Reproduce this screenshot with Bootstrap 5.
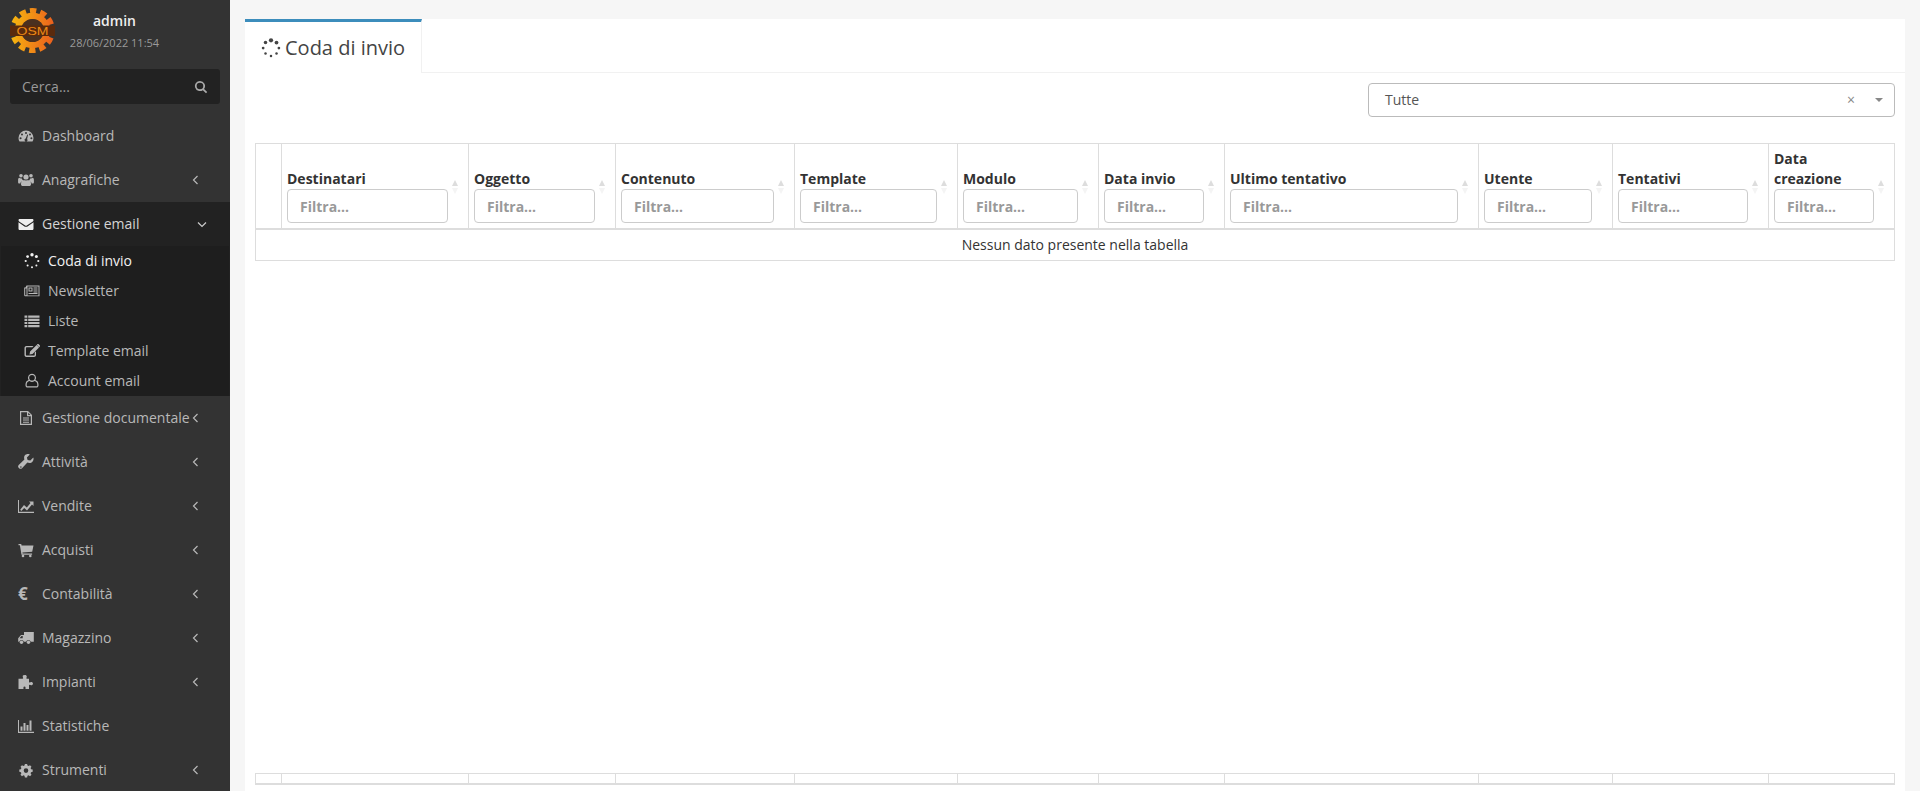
<!DOCTYPE html>
<html lang="it">
<head>
<meta charset="utf-8">
<title>Coda di invio</title>
<link href="https://cdn.jsdelivr.net/npm/bootstrap@5.3.0/dist/css/bootstrap.min.css" rel="stylesheet">
<style>
html,body{height:791px;overflow:hidden}
body{font-family:"Open Sans",sans-serif;font-size:14px;background:#f6f6f6;color:#333;line-height:20px}
.app-shell{height:791px}
.side{width:230px;flex:0 0 230px;background:#333;height:791px;overflow:hidden}
.user-box{height:69px;padding:8px 0 0 10px}
.user-meta{width:105px;margin-left:7px;text-align:center}
.user-name{color:#eee;font-weight:600;font-size:14px;line-height:20px;margin-top:3px}
.user-date{color:#9a9a9a;font-size:11px;line-height:16px;margin-top:4px;white-space:nowrap}
.search-box{margin:0 10px 10px;height:35px;background:#222;border-radius:3px;color:#999;padding:0 12px 0 12px}
.side-item{height:44px;padding:0 0 0 18px;color:#b8b8b8;white-space:nowrap}
.side-ico{width:16px;height:16px;flex:0 0 16px;margin-right:8px;fill:#b8b8b8}
.side-ico.euro{font-weight:700;font-size:17px;line-height:16px}
.side-chev{position:absolute;right:31px;width:7px;height:10px;fill:none;stroke:#b8b8b8;stroke-width:1.2}
.side-rel{position:relative}
.open-group{background:#222}
.open-group .side-item{color:#d4d4d4}
.open-group .side-item .side-ico{fill:#eee}
.open-group .side-chev{right:23px;width:10px;height:7px;stroke:#ccc}
.sub-list{margin:0 1px;background:#1e1e1e}
.sub-item{height:30px;padding-left:23px;color:#b8b8b8;white-space:nowrap}
.sub-item.is-on{color:#f2f2f2}
.sub-item .side-ico{margin-right:8px}
.sub-item.is-on .side-ico{fill:#f2f2f2}
.main-area{padding:19px 15px 0 15px;min-width:0}
.panel-box{background:#fff;height:772px}
.tab-row{height:54px;border-bottom:1px solid #f1f1f1}
.tab-on{width:177px;height:54px;border-top:3px solid #3c8dbc;border-right:1px solid #f1f1f1;background:#fff;color:#444;font-size:20px;padding-left:16px;margin-bottom:-1px}
.tab-on svg{width:20px;height:20px;margin-right:4px;fill:#444}
.panel-body{padding:10px 10px 6px 10px}
.pick-row{height:34px;margin-bottom:26px}
.pick-box{width:527px;height:34px;border:1px solid #bbb;border-radius:4px;padding:0 11px 0 16px;color:#555}
.pick-x{color:#888;font-size:14px;margin-right:20px;line-height:14px}
.pick-caret{width:0;height:0;border-left:4px solid transparent;border-right:4px solid transparent;border-top:4px solid #888}
.grid-tb{table-layout:fixed;width:1639px;margin:0;border-collapse:collapse}
.grid-tb th{position:relative;padding:5px 20px 5px 5px;vertical-align:bottom;font-weight:700;line-height:20px;border:1px solid #ddd;border-bottom:2px solid #ddd;color:#333}
.grid-tb td{padding:5px;text-align:center;border:1px solid #ddd;height:31px;color:#333}
.grid-tb .filter-in{height:34px;padding:0 10px 0 12px;font-size:14px;font-weight:700;border-color:#ccc;border-radius:4px;font-family:"Open Sans",sans-serif}
.filter-in::placeholder{color:#999;opacity:1}
.sort-up{position:absolute;right:10px;bottom:42px;width:0;height:0;border-left:3.5px solid transparent;border-right:3.5px solid transparent;border-bottom:6px solid #ddd}
.sort-up::after{content:"";position:absolute;left:-3.5px;top:8px;width:0;height:0;border-left:3.5px solid transparent;border-right:3.5px solid transparent;border-top:6px solid #f4f4f4}
.w0{width:26px}.w1{width:187px}.w2{width:147px}.w3{width:179px}.w4{width:163px}.w5{width:141px}.w6{width:126px}.w7{width:254px}.w8{width:134px}.w9{width:156px}.w10{width:126px}
.scroll-gap{flex:1 1 auto}
.grid-tb.foot-tb td{height:11px;padding:0;border:1px solid #ddd;border-bottom:2px solid #ddd}
</style>
</head>
<body>
<svg width="0" height="0" class="position-absolute">
<defs>
<symbol id="i-spin" viewBox="0 0 16 16"><circle cx="8" cy="1.800" r="1.700"/><circle cx="12.400" cy="3.600" r="1.500"/><circle cx="14.300" cy="8" r="1.100"/><circle cx="12.400" cy="12.400" r="1"/><circle cx="8" cy="14.300" r="1"/><circle cx="3.600" cy="12.400" r="1"/><circle cx="1.700" cy="8" r="1.100"/><circle cx="3.600" cy="3.600" r="1.400"/></symbol>
<symbol id="i-dash" viewBox="0 0 16 16"><path fill-rule="evenodd" d="M8 2.500A7.500 7.500 0 0 0 .5 10c0 1.400.4 2.600 1 3.500h13c.6-.9 1-2.100 1-3.500A7.500 7.500 0 0 0 8 2.500ZM8 4a1 1 0 1 1 0 2 1 1 0 0 1 0-2ZM4 5.500a1 1 0 1 1 0 2 1 1 0 0 1 0-2Zm8 0a1 1 0 1 1 0 2 1 1 0 0 1 0-2ZM2.600 9.300a1 1 0 1 1 0 2 1 1 0 0 1 0-2Zm10.800 0a1 1 0 1 1 0 2 1 1 0 0 1 0-2ZM9.300 6.500l.8.3-1 4.100a1.500 1.500 0 1 1-1.400-.4Z"/></symbol>
<symbol id="i-users" viewBox="0 0 16 16"><circle cx="8" cy="5" r="2.600"/><circle cx="3" cy="3.800" r="1.800"/><circle cx="13" cy="3.800" r="1.800"/><path d="M4.200 8.600C5 8 6.500 8.400 8 8.400s3-.4 3.800.2c.8.6 1.200 2 1.200 3.600 0 1-.7 1.800-1.800 1.800H4.800C3.700 14 3 13.200 3 12.200c0-1.600.4-3 1.200-3.600ZM.1 8c0-1.200.4-2.200 1.200-2.200.5.5 1.200.8 1.900.8.3 0 .5 0 .7-.1.1.8.5 1.500 1 2-1.300.2-2.200 1.300-2.500 3H1.300C.5 11.500.1 11 .1 10.200ZM15.900 8c0-1.200-.4-2.200-1.200-2.200-.5.5-1.200.8-1.900.8-.3 0-.5 0-.7-.1-.1.8-.5 1.500-1 2 1.300.2 2.200 1.300 2.500 3h1.100c.8 0 1.200-.5 1.200-1.300Z"/></symbol>
<symbol id="i-mail" viewBox="0 0 16 16"><path d="M.5 4.300c0-.9.6-1.300 1.300-1.300h12.400c.7 0 1.300.4 1.300 1.300 0 .6-.4 1.100-1 1.500L8.800 9.500c-.5.3-1.100.3-1.600 0L1.500 5.800c-.6-.4-1-.9-1-1.500Z"/><path d="M.5 6.300v6.400c0 .7.6 1.300 1.300 1.300h12.400c.7 0 1.300-.6 1.300-1.300V6.300L9.500 10.400c-.9.6-2.100.6-3 0Z"/></symbol>
<symbol id="i-news" viewBox="0 0 16 16"><path fill-rule="evenodd" d="M2.500 2.500h13v10.800h-14c-.8 0-1.300-.5-1.300-1.300V4.500h1.300Zm1 1v9h11v-9ZM1.200 5.500V12c0 .2.1.3.3.3h1V5.500ZM4.500 4.500h4v4h-4Zm1 1v2h2v-2Zm4-1h4v1h-4Zm0 2h4v1h-4Zm0 2h4v1h-4Zm-5 1.500h9v1h-9Z"/></symbol>
<symbol id="i-list" viewBox="0 0 16 16"><path d="M.5 2.500h2.800v2.200H.5Zm0 3.200h2.800v2.200H.5Zm0 3.200h2.800v2.200H.5Zm0 3.100h2.800v2.200H.5ZM4.200 2.500h11.300v2.200H4.200Zm0 3.200h11.300v2.200H4.200Zm0 3.200h11.300v2.200H4.200Zm0 3.100h11.300v2.200H4.200Z"/></symbol>
<symbol id="i-edit" viewBox="0 0 16 16"><path d="M2.500 3h7L8.300 4.200H2.800c-.5 0-.9.4-.9.900v6.600c0 .5.4.9.9.9h7c.5 0 .9-.4.9-.9V9.500L12 8.200V12C12 13.100 11.100 14 10 14H2.500C1.400 14 .5 13.100.5 12V5C.5 3.900 1.400 3 2.500 3Z"/><path d="M12.600 2 15 4.400 8.500 10.900l-3 .6.6-3ZM13.300 1.300c.4-.4 1-.4 1.400 0l1 1c.4.4.4 1 0 1.400l-.5.5-2.400-2.400Z"/></symbol>
<symbol id="i-user" viewBox="0 0 16 16"><path fill-rule="evenodd" d="M8 .8a4 4 0 0 1 3.400 6.100c1.900.6 3.100 2.200 3.100 4.500v1c0 1.200-.9 2.100-2.100 2.100H3.600c-1.200 0-2.100-.9-2.100-2.100v-1c0-2.300 1.200-3.900 3.100-4.500A4 4 0 0 1 8 .8Zm0 1.200a2.800 2.800 0 1 0 0 5.600 2.800 2.800 0 0 0 0-5.600ZM5.500 7.900c-1.800.4-2.800 1.700-2.800 3.500v1c0 .5.4.9.9.9h8.800c.5 0 .9-.4.9-.9v-1c0-1.800-1-3.100-2.800-3.500a4 4 0 0 1-5 0Z"/></symbol>
<symbol id="i-file" viewBox="0 0 16 16"><path fill-rule="evenodd" d="M2 1h8l4 4v10H2Zm1.200 1.200v11.600h9.600V6.200H9V2.200ZM10.200 2.700V5h2.300ZM5 7.500h6v1H5Zm0 2.100h6v1H5Zm0 2.100h6v1H5Z"/></symbol>
<symbol id="i-wrench" viewBox="0 0 16 16"><path fill-rule="evenodd" d="M15.300 3.400c.7 2-.1 4.300-2.100 5.300-1.300.6-2.700.5-3.800-.1L4 14.200c-.8.8-2.100.8-2.900 0l-.4-.4c-.8-.8-.8-2 0-2.800l5.700-5.500c-.5-1.300-.4-2.700.3-3.900C7.700.3 9.900-.3 11.800.4L8.900 3.400l.7 2.500 2.700.6ZM2.400 12.400a.7.7 0 1 0 1 1 .7.7 0 0 0-1-1Z"/></symbol>
<symbol id="i-line" viewBox="0 0 16 16"><path d="M0 2h1v11.800h15V15H0Z"/><path d="M2.200 11.800 6 7l2.800 2.500L12.500 5 11 3.500h4.500V8L14 6.500l-5 6L6.200 10l-2.900 3Z"/></symbol>
<symbol id="i-cart" viewBox="0 0 16 16"><path d="M.5 2h2.700l.4 1.500h11.900l-1.300 6.300-9.800.7.2 1h9.500v1.300H3.500L1.900 3.300H.5Z"/><circle cx="5" cy="14" r="1.300"/><circle cx="12.300" cy="14" r="1.300"/></symbol>
<symbol id="i-truck" viewBox="0 0 16 16"><path fill-rule="evenodd" d="M6 2h9.800v9.800h-3.100a2.300 2.300 0 0 0-4.500 0H5.800a2.300 2.300 0 0 0-4.500 0H.2V8.300L3 5h3Zm-1.300 4H3.500L1.500 8.300h3.200Z"/><circle cx="3.500" cy="12.300" r="1.700"/><circle cx="10.500" cy="12.300" r="1.700"/></symbol>
<symbol id="i-puzzle" viewBox="0 0 16 16"><path d="M6 1.300c1.200-.8 2.800 0 2.800 1.200 0 .7-.5 1.200-.5 1.700 0 .3.200.5.700.5h2v3.300c0 .4.300.6.600.6.500 0 1-.5 1.600-.5.900 0 1.800.7 1.800 1.600s-.9 1.500-1.800 1.500c-.6 0-1.100-.5-1.600-.5-.3 0-.6.200-.6.600V15H7.500c0-1.200.3-2.500-1-2.500s-1 1.300-1 2.500H.5V4.700h4c.4 0 .7-.2.700-.5 0-.5-.5-1-.5-1.700 0-.5.300-.9.300-1.200Z"/></symbol>
<symbol id="i-bars" viewBox="0 0 16 16"><path d="M0 2h1v11.800h15V15H0Zm2.500 6.500h2v4.300h-2Zm3-3.500h2v7.800h-2Zm3 2h2v5.800h-2Zm3-4.500h2v10.300h-2Z"/></symbol>
<symbol id="i-cog" viewBox="0 0 16 16"><path fill-rule="evenodd" d="M6.900 2h2.200l.4 1.600 1.100.5 1.400-.9 1.500 1.500-.9 1.400.5 1.100 1.600.4v2.200l-1.600.4-.5 1.100.9 1.400-1.500 1.500-1.400-.9-1.100.4-.4 1.700H6.900l-.4-1.700-1.100-.4-1.400.9-1.500-1.500.9-1.400-.5-1.100-1.600-.4V7.600l1.600-.4.500-1.100-.9-1.400 1.500-1.500 1.400.9 1.100-.5ZM8 6.300a2.300 2.300 0 1 0 0 4.600 2.300 2.300 0 0 0 0-4.600Z"/></symbol>
<symbol id="i-search" viewBox="0 0 16 16"><path fill-rule="evenodd" d="M6.800 1a5.800 5.800 0 0 1 4.700 9.200l3.600 3.600-1.400 1.400-3.600-3.600A5.800 5.800 0 1 1 6.800 1Zm0 2a3.800 3.800 0 1 0 0 7.600 3.800 3.800 0 0 0 0-7.600Z"/></symbol>
<symbol id="i-left" viewBox="0 0 7 10"><path d="M5.500 1 1.500 5l4 4"/></symbol>
<symbol id="i-down" viewBox="0 0 10 7"><path d="M1 1.500l4 4 4-4"/></symbol>
<linearGradient id="gear-g" gradientUnits="userSpaceOnUse" x1="0" y1="20" x2="45" y2="28"><stop offset="0" stop-color="#f7b90f"/><stop offset="1" stop-color="#ea5b1e"/></linearGradient>
</defs>
</svg>

<div class="app-shell d-flex">
<aside class="side d-flex flex-column">
  <div class="user-box d-flex align-items-start flex-shrink-0">
    <svg width="45" height="45" viewBox="0 0 45 45" aria-hidden="true">
      <circle cx="22.500" cy="22.500" r="19" fill="none" stroke="url(#gear-g)" stroke-width="7" stroke-dasharray="6 3.948" transform="rotate(-9 22.500 22.500)"/>
      <circle cx="22.500" cy="22.500" r="14.500" fill="none" stroke="url(#gear-g)" stroke-width="6.500"/>
      <circle cx="22.500" cy="22.500" r="11.500" fill="#4a3020"/>
      <rect x="0" y="17.500" width="45" height="10.500" fill="#5a2a0d"/>
      <text x="22.500" y="26.800" text-anchor="middle" font-family="Liberation Sans, sans-serif" font-size="11" textLength="32" lengthAdjust="spacingAndGlyphs" fill="#ee8a16">OSM</text>
    </svg>
    <div class="user-meta">
      <div class="user-name">admin</div>
      <div class="user-date">28/06/2022 11:54</div>
    </div>
  </div>
  <div class="search-box d-flex align-items-center justify-content-between flex-shrink-0">
    <span>Cerca...</span>
    <svg width="14" height="14" fill="#aaa"><use href="#i-search"/></svg>
  </div>
  <nav class="d-flex flex-column flex-shrink-0">
    <div class="side-item side-rel d-flex align-items-center"><svg class="side-ico"><use href="#i-dash"/></svg>Dashboard</div>
    <div class="side-item side-rel d-flex align-items-center"><svg class="side-ico"><use href="#i-users"/></svg>Anagrafiche<svg class="side-chev"><use href="#i-left"/></svg></div>
    <div class="open-group">
      <div class="side-item side-rel d-flex align-items-center"><svg class="side-ico"><use href="#i-mail"/></svg>Gestione email<svg class="side-chev"><use href="#i-down"/></svg></div>
      <div class="sub-list">
        <div class="sub-item is-on d-flex align-items-center"><svg class="side-ico"><use href="#i-spin"/></svg>Coda di invio</div>
        <div class="sub-item d-flex align-items-center"><svg class="side-ico"><use href="#i-news"/></svg>Newsletter</div>
        <div class="sub-item d-flex align-items-center"><svg class="side-ico"><use href="#i-list"/></svg>Liste</div>
        <div class="sub-item d-flex align-items-center"><svg class="side-ico"><use href="#i-edit"/></svg>Template email</div>
        <div class="sub-item d-flex align-items-center"><svg class="side-ico"><use href="#i-user"/></svg>Account email</div>
      </div>
    </div>
    <div class="side-item side-rel d-flex align-items-center"><svg class="side-ico"><use href="#i-file"/></svg>Gestione documentale<svg class="side-chev"><use href="#i-left"/></svg></div>
    <div class="side-item side-rel d-flex align-items-center"><svg class="side-ico"><use href="#i-wrench"/></svg>Attività<svg class="side-chev"><use href="#i-left"/></svg></div>
    <div class="side-item side-rel d-flex align-items-center"><svg class="side-ico"><use href="#i-line"/></svg>Vendite<svg class="side-chev"><use href="#i-left"/></svg></div>
    <div class="side-item side-rel d-flex align-items-center"><svg class="side-ico"><use href="#i-cart"/></svg>Acquisti<svg class="side-chev"><use href="#i-left"/></svg></div>
    <div class="side-item side-rel d-flex align-items-center"><span class="side-ico euro">€</span>Contabilità<svg class="side-chev"><use href="#i-left"/></svg></div>
    <div class="side-item side-rel d-flex align-items-center"><svg class="side-ico"><use href="#i-truck"/></svg>Magazzino<svg class="side-chev"><use href="#i-left"/></svg></div>
    <div class="side-item side-rel d-flex align-items-center"><svg class="side-ico"><use href="#i-puzzle"/></svg>Impianti<svg class="side-chev"><use href="#i-left"/></svg></div>
    <div class="side-item side-rel d-flex align-items-center"><svg class="side-ico"><use href="#i-bars"/></svg>Statistiche</div>
    <div class="side-item side-rel d-flex align-items-center"><svg class="side-ico"><use href="#i-cog"/></svg>Strumenti<svg class="side-chev"><use href="#i-left"/></svg></div>
  </nav>
</aside>

<main class="main-area flex-grow-1">
  <div class="panel-box d-flex flex-column">
    <div class="tab-row d-flex">
      <div class="tab-on d-flex align-items-center"><svg><use href="#i-spin"/></svg>Coda di invio</div>
    </div>
    <div class="panel-body d-flex flex-column flex-grow-1">
      <div class="pick-row d-flex justify-content-end">
        <div class="pick-box d-flex align-items-center justify-content-between">
          <span>Tutte</span>
          <span class="d-flex align-items-center"><span class="pick-x">×</span><span class="pick-caret"></span></span>
        </div>
      </div>
      <table class="table grid-tb">
        <colgroup><col class="w0"><col class="w1"><col class="w2"><col class="w3"><col class="w4"><col class="w5"><col class="w6"><col class="w7"><col class="w8"><col class="w9"><col class="w10"></colgroup>
        <thead><tr>
          <th></th>
          <th>Destinatari<input class="form-control filter-in" placeholder="Filtra..."><span class="sort-up"></span></th>
          <th>Oggetto<input class="form-control filter-in" placeholder="Filtra..."><span class="sort-up"></span></th>
          <th>Contenuto<input class="form-control filter-in" placeholder="Filtra..."><span class="sort-up"></span></th>
          <th>Template<input class="form-control filter-in" placeholder="Filtra..."><span class="sort-up"></span></th>
          <th>Modulo<input class="form-control filter-in" placeholder="Filtra..."><span class="sort-up"></span></th>
          <th>Data invio<input class="form-control filter-in" placeholder="Filtra..."><span class="sort-up"></span></th>
          <th>Ultimo tentativo<input class="form-control filter-in" placeholder="Filtra..."><span class="sort-up"></span></th>
          <th>Utente<input class="form-control filter-in" placeholder="Filtra..."><span class="sort-up"></span></th>
          <th>Tentativi<input class="form-control filter-in" placeholder="Filtra..."><span class="sort-up"></span></th>
          <th>Data creazione<input class="form-control filter-in" placeholder="Filtra..."><span class="sort-up"></span></th>
        </tr></thead>
        <tbody><tr><td colspan="11">Nessun dato presente nella tabella</td></tr></tbody>
      </table>
      <div class="scroll-gap"></div>
      <table class="table grid-tb foot-tb">
        <colgroup><col class="w0"><col class="w1"><col class="w2"><col class="w3"><col class="w4"><col class="w5"><col class="w6"><col class="w7"><col class="w8"><col class="w9"><col class="w10"></colgroup>
        <tbody><tr><td></td><td></td><td></td><td></td><td></td><td></td><td></td><td></td><td></td><td></td><td></td></tr></tbody>
      </table>
    </div>
  </div>
</main>
</div>
</body>
</html>
